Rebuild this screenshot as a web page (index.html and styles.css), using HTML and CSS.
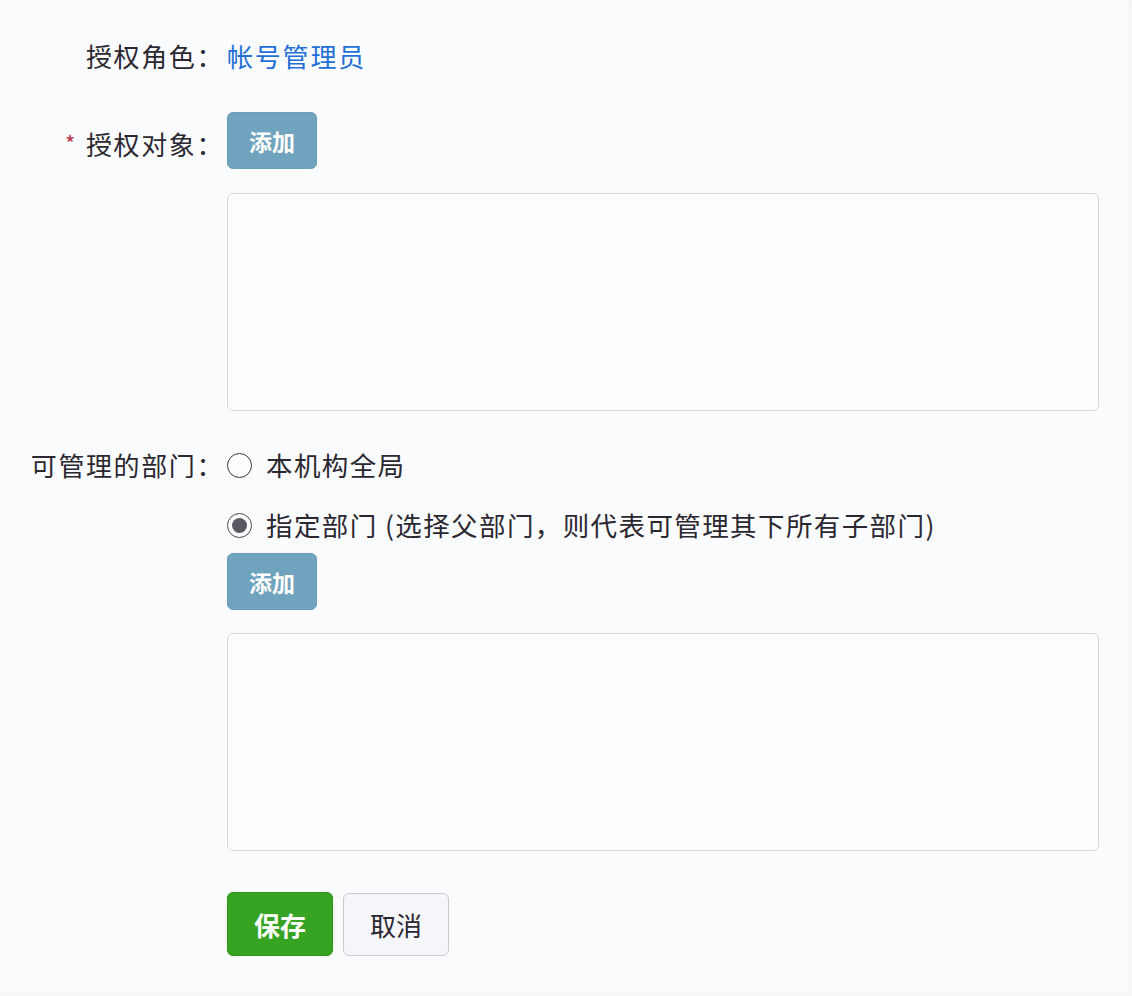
FILE: index.html
```html
<!DOCTYPE html>
<html lang="zh-CN">
<head>
<meta charset="utf-8">
<title>授权</title>
<link rel="stylesheet" href="styles.css">
</head>
<body>
<div class="frame">
  <form class="form">
    <div class="row row-role">
      <div class="label">授权角色：</div>
      <div class="field"><a class="link" href="#">帐号管理员</a></div>
    </div>

    <div class="row row-target">
      <div class="label label-btn"><span class="req">*</span>授权对象：</div>
      <div class="field">
        <button type="button" class="btn btn-add">添加</button>
        <div class="box box-1"></div>
      </div>
    </div>

    <div class="row row-dept">
      <div class="label">可管理的部门：</div>
      <div class="field">
        <label class="radio-line">
          <span class="radio"></span>
          <span class="radio-text">本机构全局</span>
        </label>
        <label class="radio-line radio-line-2">
          <span class="radio checked"></span>
          <span class="radio-text">指定部门 (选择父部门，则代表可管理其下所有子部门)</span>
        </label>
        <button type="button" class="btn btn-add btn-add-2">添加</button>
        <div class="box box-2"></div>
        <div class="actions">
          <button type="button" class="btn btn-save">保存</button>
          <button type="button" class="btn btn-cancel">取消</button>
        </div>
      </div>
    </div>
  </form>
</div>
</body>
</html>
```

FILE: styles.css
```css
* { box-sizing: border-box; }

html, body {
  margin: 0;
  padding: 0;
  background: #f4f6f8;
}

body {
  font-family: "Noto Sans CJK SC", "Noto Sans", sans-serif;
  color: #2b2730;
  font-size: 26px;
}

.frame {
  width: 1130px;
  height: 992px;
  margin-top: 1px;
  background: #fafbfd;
  border-right: 1px solid #eef0f3;
  padding-top: 35px;
}

.form {
  display: flex;
  flex-direction: column;
}

.row {
  display: grid;
  grid-template-columns: 224px 872px;
  column-gap: 3px;
}

.label {
  text-align: right;
  line-height: 40px;
  white-space: nowrap;
  letter-spacing: 1.6px;
}

.label-btn {
  padding-top: 12px;
}

.req {
  color: #b8324a;
  font-size: 22px;
  margin-right: 9px;
  position: relative;
  top: -3px;
}

.field {
  display: flex;
  flex-direction: column;
  align-items: flex-start;
}

.link {
  color: #1f6fd6;
  text-decoration: none;
  line-height: 40px;
  letter-spacing: 1.8px;
}

.row-target { margin-top: 36px; }

.btn {
  font-family: "Noto Sans CJK SC", "Noto Sans", sans-serif;
  border-radius: 6px;
  cursor: pointer;
  padding: 0;
}

.btn-add {
  width: 90px;
  height: 57px;
  background: #70a3bd;
  border: 1px solid #6a9db7;
  color: #ffffff;
  font-size: 23px;
  font-weight: 700;
}

.box {
  width: 872px;
  height: 218px;
  margin-top: 24px;
  background: #fcfdfe;
  border: 1.5px solid #d5d8dd;
  border-radius: 6px;
}

.row-dept { margin-top: 34px; }

.radio-line {
  display: flex;
  align-items: center;
  height: 40px;
  line-height: 40px;
}

.radio-line-2 { margin-top: 20px; }

.radio {
  width: 25px;
  height: 25px;
  border: 1.6px solid #3a3640;
  border-radius: 50%;
  display: flex;
  align-items: center;
  justify-content: center;
  margin-right: 14px;
  background: #fdfdfe;
}

.radio.checked { border-color: #4a4850; }

.radio.checked::after {
  content: "";
  width: 15px;
  height: 15px;
  border-radius: 50%;
  background: #5a5860;
}

.radio-text {
  font-size: 26.5px;
  letter-spacing: 1.4px;
}

.btn-add-2 { margin-top: 8px; }

.box-2 { margin-top: 23px; }

.actions {
  display: flex;
  gap: 10px;
  margin-top: 41px;
}

.btn-save {
  width: 106px;
  height: 64px;
  background: #37a322;
  border: 1px solid #2f961c;
  color: #ffffff;
  font-size: 26px;
  font-weight: 700;
}

.btn-cancel {
  width: 106px;
  height: 63px;
  margin-top: 1px;
  background: #f5f6f9;
  border: 1.5px solid #c9cbd0;
  color: #2b2730;
  font-size: 26px;
}
```
